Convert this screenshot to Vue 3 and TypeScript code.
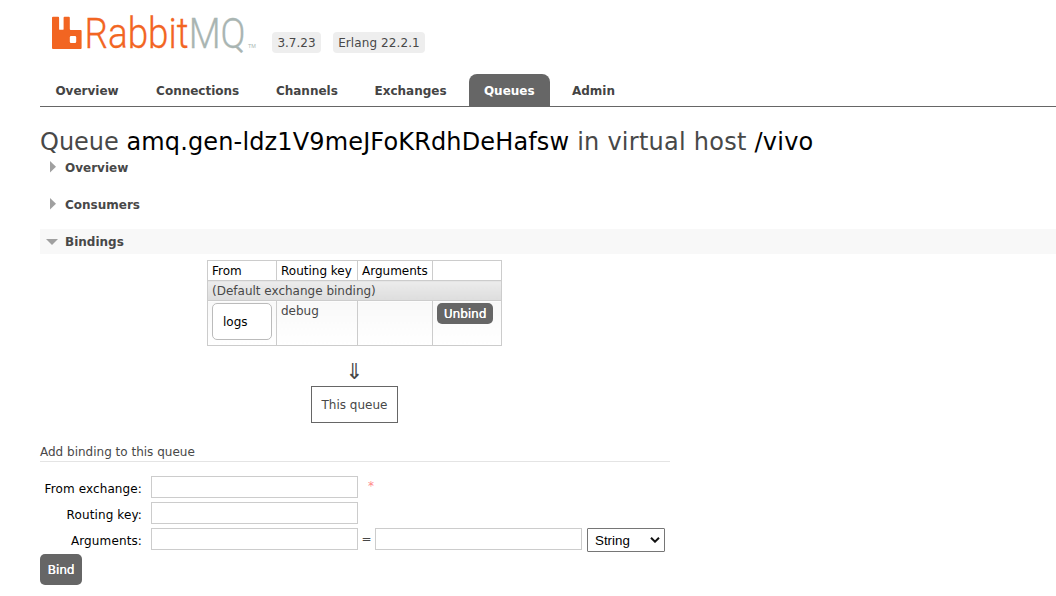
<script setup lang="ts">
import { ref } from 'vue'

interface Tab { label: string; width: number }

const tabs: Tab[] = [
  { label: 'Overview', width: 94 },
  { label: 'Connections', width: 113 },
  { label: 'Channels', width: 91 },
  { label: 'Exchanges', width: 102 },
  { label: 'Queues', width: 81 },
  { label: 'Admin', width: 73 },
]
const active = ref('Queues')
const sections = ref([
  { title: 'Overview', open: false },
  { title: 'Consumers', open: false },
  { title: 'Bindings', open: true },
])
const argumentType = ref('String')
</script>

<template>
  <div class="page">
    <header class="top">
      <svg class="logo" width="206" height="42" viewBox="0 0 206 42">
        <path fill="#f26522" fill-rule="evenodd" d="M1 4.800h5.200q.9 0 .9.900v11.200q0 .9.900.9h2.700q.9 0 .9-.9V5.700q0-.9.900-.9h4.400q.9 0 .9.900v11.400q0 .9.900.9h10q.9 0 .9.900v17.200q0 .9-.9.900H1q-1 0-1-.9V5.700q0-.9 1-.9zM19.100 24q-1.300 0-1.300 1.300v4.400q0 1.300 1.300 1.300h3.800q1.300 0 1.300-1.300v-4.400q0-1.300-1.300-1.300z" />
        <text class="word" y="36" textLength="161" lengthAdjust="spacingAndGlyphs" x="32.500"><tspan class="rabbit">Rabbit</tspan><tspan class="mq">MQ</tspan></text>
        <text class="tm" x="196" y="35.500">TM</text>
      </svg>
      <span class="badge version">3.7.23</span>
      <span class="badge erlang">Erlang 22.2.1</span>
    </header>

    <nav class="tabs">
      <a
        v-for="tab in tabs"
        :key="tab.label"
        class="tab"
        :class="{ selected: tab.label === active }"
        :style="{ width: tab.width + 'px' }"
        @click="active = tab.label"
      ><span>{{ tab.label }}</span></a>
    </nav>

    <h1>Queue <b>amq.gen-ldz1V9meJFoKRdhDeHafsw</b><span class="host"> in virtual host <b>/vivo</b></span></h1>

    <h2 v-for="s in sections" :key="s.title" :class="{ open: s.open }" @click="s.open = !s.open">
      <svg class="arrow" width="12" height="12" viewBox="0 0 12 12">
        <path v-if="s.open" d="M0 3h12L6 9z" />
        <path v-else d="M4-1l6 5.700-6 5.700z" />
      </svg>
      <span>{{ s.title }}</span>
    </h2>

    <section class="bindings">
      <table>
        <colgroup><col class="c1"><col class="c2"><col class="c3"><col class="c4"></colgroup>
        <thead>
          <tr><th>From</th><th>Routing key</th><th>Arguments</th><th></th></tr>
        </thead>
        <tbody>
          <tr class="default"><td colspan="4">(Default exchange binding)</td></tr>
          <tr class="binding">
            <td><span class="exchange">logs</span></td>
            <td>debug</td>
            <td></td>
            <td><button class="unbind">Unbind</button></td>
          </tr>
        </tbody>
      </table>
      <div class="down">⇓</div>
      <div class="queue">This queue</div>
    </section>

    <h3>Add binding to this queue</h3>
    <form @submit.prevent>
      <div class="row">
        <label>From exchange:</label><input type="text"><span class="mand">*</span>
      </div>
      <div class="row">
        <label>Routing key:</label><input type="text">
      </div>
      <div class="row">
        <label>Arguments:</label><input type="text"><span class="eq">=</span><input type="text">
        <div class="select">
          <span>{{ argumentType }}</span>
          <svg width="10" height="6" viewBox="0 0 10 6"><path d="M1 .8l4 3.900 4-3.900" /></svg>
        </div>
      </div>
      <button class="bind">Bind</button>
    </form>
  </div>
</template>

<style>
body { margin: 0; background: #fff; overflow: hidden; }
</style>

<style scoped>
* { box-sizing: border-box; }
.page {
  width: 1056px;
  height: 596px;
  padding-left: 40px;
  overflow: hidden;
  background: #fff;
  color: #484848;
  font: 12px/17px Verdana, "DejaVu Sans", sans-serif;
}
.top { display: flex; height: 74px; padding: 12px 0 0 12px; align-items: flex-start; }
.logo { display: block; flex: none; overflow: visible; }
.word { font-family: Roboto, sans-serif; font-weight: 300; font-size: 43px; stroke-width: .3px; }
.rabbit { fill: #f26522; stroke: #f26522; }
.mq { fill: #a9b5b2; stroke: #a9b5b2; }
.tm { font: 5.500px "Liberation Sans", sans-serif; fill: #a9b5b2; }
.badge {
  height: 21px;
  margin-top: 20px;
  border-radius: 4px;
  background: #eee;
  line-height: 23px;
  text-align: center;
  white-space: nowrap;
}
.version { width: 49px; margin-left: 14px; }
.erlang { width: 92px; margin-left: 12px; letter-spacing: .1px; }
.tabs { display: flex; gap: 7.200px; height: 33px; border-bottom: 1px solid #666; }
.tab {
  display: flex;
  justify-content: center;
  flex: none;
  height: 32px;
  border-radius: 8px 8px 0 0;
  color: #444;
  font-weight: bold;
  line-height: 34px;
  white-space: nowrap;
}
.tab.selected { background: #666; color: #fff; }
h1 {
  height: 48px;
  margin: 0;
  padding-top: 20px;
  font-size: 24px;
  font-weight: normal;
  line-height: 31px;
  white-space: nowrap;
}
h1 b { color: #000; font-weight: normal; letter-spacing: .14px; }
h1 .host, h1 .host b { letter-spacing: .25px; }
h2 {
  display: flex;
  align-items: center;
  height: 25px;
  margin: 0 0 12px;
  padding-left: 6px;
  font-size: 12px;
  line-height: 25px;
}
h2 span { padding-top: 1px; }
h2.open { background: #f8f8f8; margin-bottom: 6px; }
.arrow { margin-right: 7px; fill: #a0a0a0; overflow: visible; }
.bindings { display: flex; flex-direction: column; height: 183px; padding-left: 167px; }
table { width: 295px; table-layout: fixed; border-collapse: collapse; }
.c1 { width: 69px; }
.c2 { width: 81px; }
.c3 { width: 75px; }
.c4 { width: 69px; }
th, td {
  height: 20px;
  padding: 1px 4px 0;
  border: 1px solid #ccc;
  font-weight: normal;
  line-height: 18px;
  text-align: left;
  vertical-align: top;
  white-space: nowrap;
}
th { color: #000; }
.default td { background: linear-gradient(#ececec, #ddd); }
.binding td { height: 45px; background: linear-gradient(#f8f8f8, #fff); }
.exchange {
  display: block;
  width: 60px;
  height: 37px;
  margin-top: 1px;
  padding-left: 10px;
  border: 1px solid #bbb;
  border-radius: 5px;
  background: #fff;
  color: #000;
  line-height: 36px;
}
button { border: 0; background: #666; color: #fff; font-family: inherit; font-size: 12px; padding: 0; text-shadow: .3px 0 #fff; }
.unbind { display: block; width: 56px; height: 21px; margin-top: 1px; border-radius: 5px; line-height: 20px; }
.down { width: 295px; height: 40px; padding-top: 10px; font-size: 22px; line-height: 32px; text-align: center; }
.queue { width: 87px; height: 37px; margin-left: 104px; border: 1px solid #666; line-height: 36px; text-align: center; }
h3 { width: 630px; height: 19px; margin: 0 0 14px; border-bottom: 1px solid #e4e4e4; font-size: 12px; font-weight: normal; line-height: 19px; }
.row { display: flex; height: 26px; align-items: flex-start; }
label { width: 102px; margin-right: 9px; color: #000; letter-spacing: .12px; line-height: 26px; text-align: right; white-space: nowrap; }
input { width: 207px; height: 22px; border: 1px solid #ccc; padding: 0; background: #fff; }
.mand { padding-left: 10px; color: #f88; line-height: 20px; }
.eq { width: 17px; text-align: center; line-height: 22px; }
.select {
  display: flex;
  align-items: center;
  justify-content: space-between;
  width: 78px;
  height: 24px;
  margin-left: 5px;
  padding: 0 4px 0 7px;
  border: 1px solid #767676;
  border-radius: 1px;
  color: #000;
  font: 13.333px "Liberation Sans", sans-serif;
}
.select path { fill: none; stroke: #111; stroke-width: 2; }
.bind { display: block; width: 42px; height: 31px; padding-top: 1px; border-radius: 5px; line-height: 30px; }
</style>
